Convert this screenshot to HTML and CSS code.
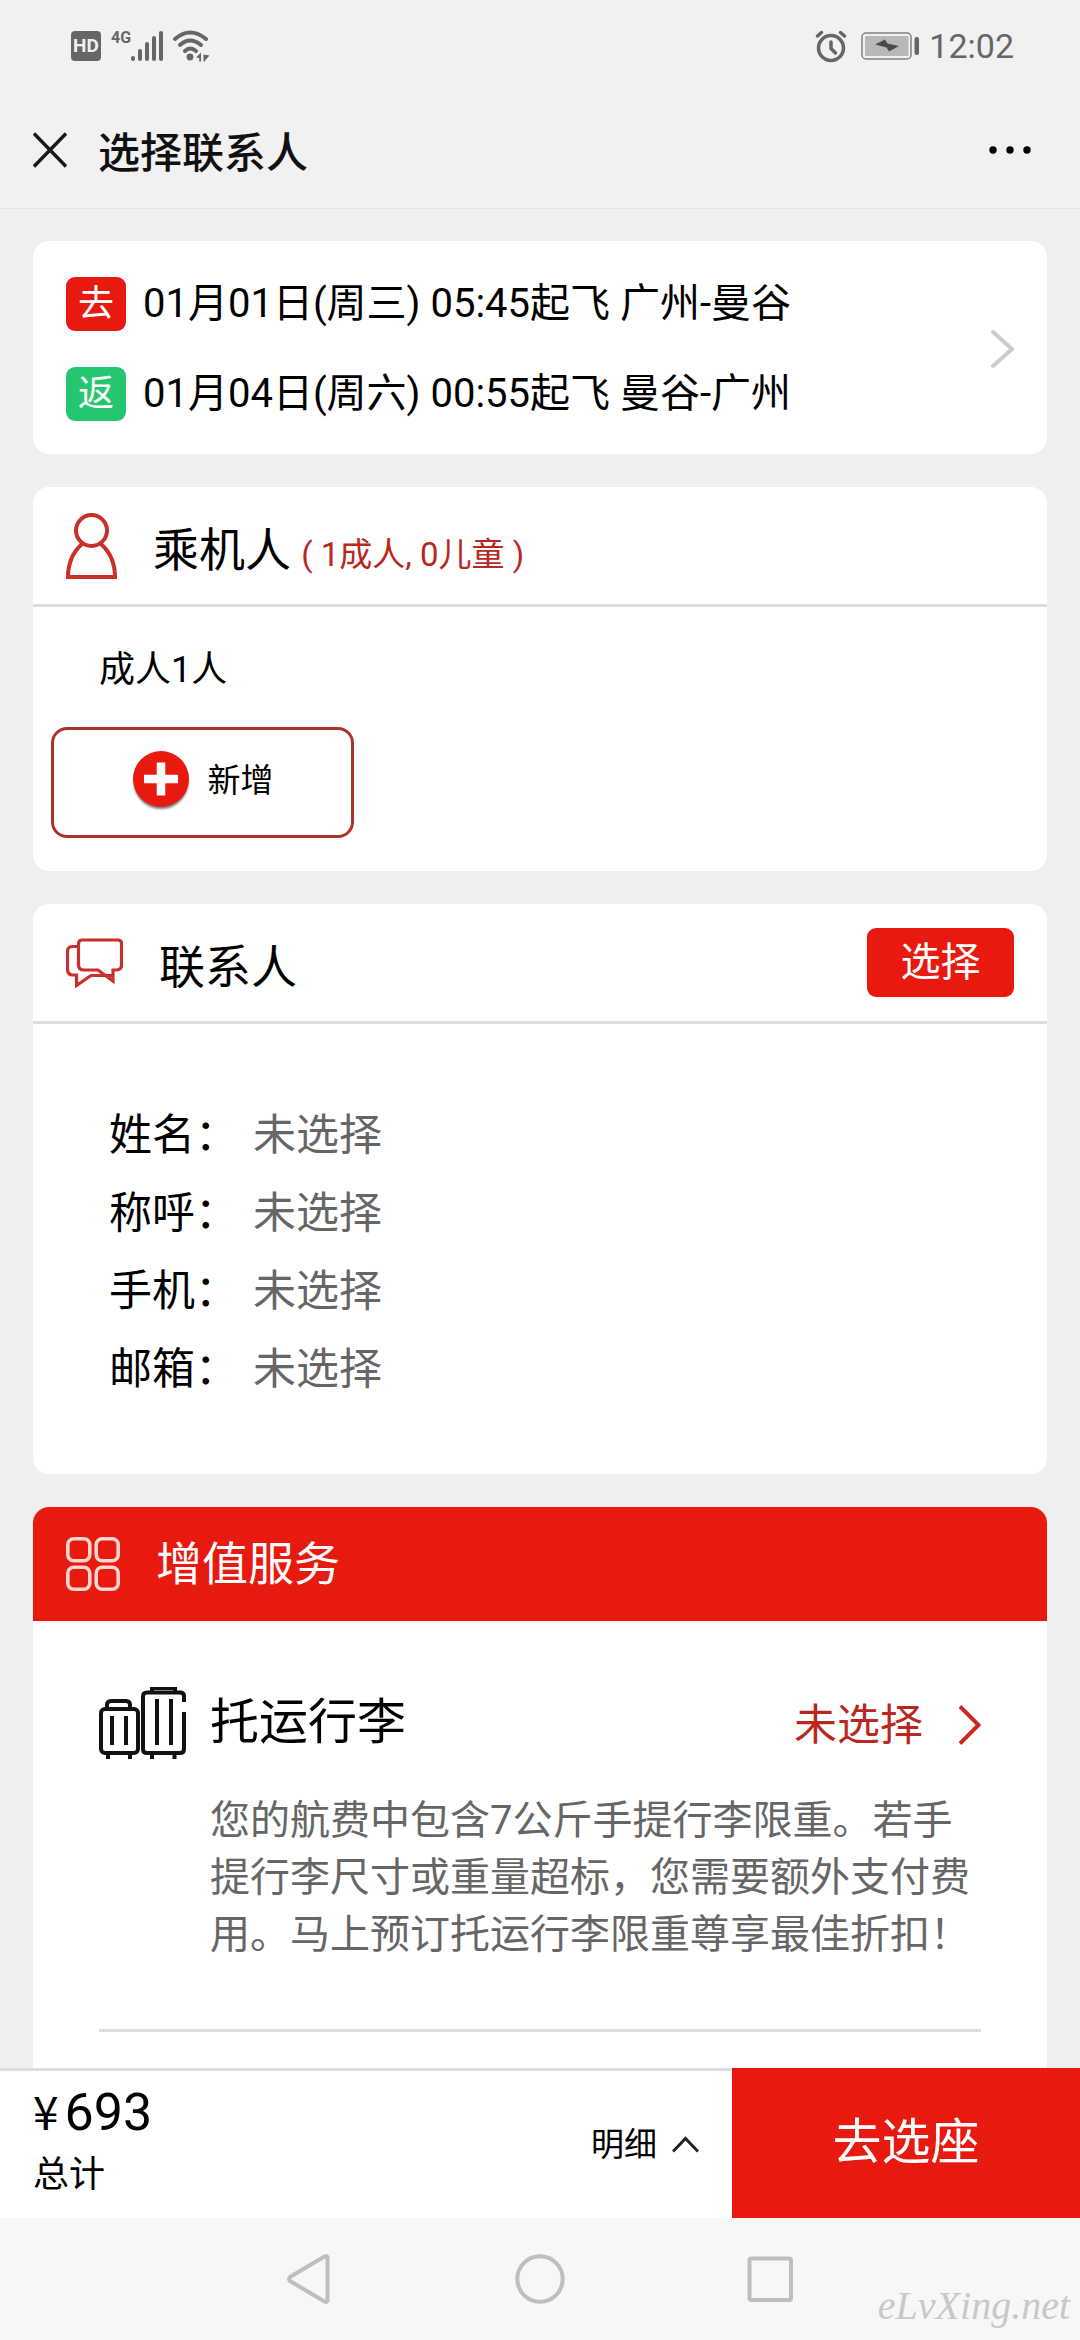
FILE: index.html
```html
<!DOCTYPE html>
<html lang="zh-CN">
<head>
<meta charset="utf-8">
<meta name="viewport" content="width=device-width, initial-scale=1">
<title>选择联系人</title>
<link rel="stylesheet" href="styles.css">
</head>
<body>
<div class="status-bar">
  <div class="status-left">
    <span class="hd">HD</span>
    <span class="net">4G</span>
    <svg class="signal" width="33" height="32" viewBox="0 0 33 32" fill="none" stroke="#666" stroke-width="4" stroke-linecap="round"><path d="M2 28v1M9 21v8M16 14v15M23 8v21M30 3v26"/></svg>
    <svg width="38" height="32" viewBox="0 0 38 32"><g fill="none" stroke="#666" stroke-width="4" stroke-linecap="round"><path d="M3 9Q18 -4 34 9"/><path d="M8 15Q18 6 29 15"/><path d="M13 21Q18 16 24 21"/></g><circle cx="18" cy="27" r="3.4" fill="#666"/><path d="M29 22.500v9h-1.800v-3.500l-3.200-.5zM31.500 22.500v2l6 1-4 4.500-.8 1.500h-1.200z" fill="#666"/></svg>
  </div>
  <div class="status-right">
    <svg width="32" height="34" viewBox="0 0 32 34" fill="none" stroke="#666" stroke-linecap="round"><circle cx="16" cy="19" r="12.500" stroke-width="3.500"/><path d="M16 13v6.500l4.500 4.500" stroke-width="3.500"/><path d="M2.500 7l4-3.500M29.500 7l-4-3.500" stroke-width="3.500"/></svg>
    <svg class="battery" width="58" height="28" viewBox="0 0 58 28"><rect x="1" y="1" width="49" height="26" rx="4" fill="none" stroke="#808080" stroke-width="1.500"/><rect x="4" y="4" width="43.500" height="20" rx="1" fill="#b8b8b8"/><path d="M14 12.500L24 7.500L26.500 11.500L38 14L28 19.500L25.500 15.500z" fill="#4a4a4a"/><rect x="53.500" y="5" width="4.500" height="18" rx="2" fill="#666"/></svg>
    <span class="clock">12:02</span>
  </div>
</div>
<header class="title-bar">
  <button class="icon-button" type="button" aria-label="关闭"><svg width="34" height="36" viewBox="0 0 34 36" fill="none" stroke="#181818" stroke-width="3.400"><path d="M1 1.500L33 34.500M33 1.500L1 34.500"/></svg></button>
  <h1>选择联系人</h1>
  <button class="icon-button" type="button" aria-label="更多"><svg width="44" height="12" viewBox="0 0 44 12"><circle cx="5" cy="6" r="3.700"/><circle cx="22" cy="6" r="3.700"/><circle cx="39" cy="6" r="3.700"/></svg></button>
</header>

<main>
  <a class="card trip" href="#trip">
    <span class="legs">
      <span class="leg"><span class="badge go">去</span>01月01日(周三) 05:45起飞 广州-曼谷</span>
      <span class="leg"><span class="badge back">返</span>01月04日(周六) 00:55起飞 曼谷-广州</span>
    </span>
    <svg width="24" height="40" viewBox="0 0 24 40" fill="none" stroke="#ccc" stroke-width="4" stroke-linecap="round"><path d="M3 3L22 20L3 37"/></svg>
  </a>

  <section class="card">
    <div class="card-head">
      <svg class="head-icon" width="51" height="66" viewBox="0 0 51 66" fill="none" stroke="#c9302a" stroke-width="4"><circle cx="25.500" cy="17.500" r="15.500"/><path d="M16 31C6 40 2 52 2 64h47C49 52 45 40 35 31"/></svg>
      <h2>乘机人 <span class="count">( 1成人, 0儿童 )</span></h2>
    </div>
    <div class="passengers">
      <p>成人1人</p>
      <button class="add" type="button">
        <svg width="58" height="62" viewBox="0 0 58 62"><defs><filter id="soft" x="-20%" y="-20%" width="140%" height="140%"><feGaussianBlur stdDeviation="1.200"/></filter></defs><circle cx="29" cy="31.500" r="27.500" fill="#777" filter="url(#soft)"/><circle cx="29" cy="29" r="28" fill="#e81a10"/><path d="M29 12.500v33M12 29h34" stroke="#fff" stroke-width="8.500"/></svg>
        新增
      </button>
    </div>
  </section>

  <section class="card">
    <div class="card-head">
      <svg class="head-icon" width="57" height="50" viewBox="0 0 57 50" fill="none" stroke="#c9302a" stroke-width="3.200" stroke-linejoin="miter"><path d="M16 2h36q3.500 0 3.500 3.500v22q0 4-4.500 4.500h-4v11L32 32H18q-5.500 0-5.500-5V6q0-4 3.500-4z"/><path d="M12 8.500H6Q1.500 9 1.500 13v18q0 6 5 6h4v10.500L25 37.500q12 0 21 0"/></svg>
      <h2>联系人</h2>
      <button class="choose" type="button">选择</button>
    </div>
    <dl class="contact">
      <dt>姓名：</dt><dd>未选择</dd>
      <dt>称呼：</dt><dd>未选择</dd>
      <dt>手机：</dt><dd>未选择</dd>
      <dt>邮箱：</dt><dd>未选择</dd>
    </dl>
  </section>

  <section class="card services">
    <div class="services-head">
      <svg class="head-icon" width="54" height="54" viewBox="0 0 54 54" fill="none" stroke="#ffd5d0" stroke-width="3.600"><rect x="1.800" y="1.800" width="22" height="22" rx="6"/><rect x="30.200" y="1.800" width="22" height="22" rx="6"/><rect x="1.800" y="30.200" width="22" height="22" rx="6"/><rect x="30.200" y="30.200" width="22" height="22" rx="6"/></svg>
      <h2>增值服务</h2>
    </div>
    <div class="service">
      <div class="service-row">
        <svg width="87" height="72" viewBox="0 0 87 72" fill="none" stroke="#111" stroke-width="4"><path d="M8 22v-4q0-4 4-4h15q4 0 4 4v4"/><rect x="2" y="22" width="37" height="44" rx="4"/><path d="M13 29v29M27 29v29M9 67v5M31 67v5"/><path d="M53 5V1h23v4"/><path d="M85 15V9q0-3.500-4-3.500H48q-4 0-4 4V62q0 4 4 4h33q4 0 4-4V25"/><path d="M58 12v46M72 12v46M53 67v5M75.500 67v5"/></svg>
        <h3>托运行李</h3>
        <a class="service-link" href="#baggage">未选择
          <svg width="22" height="40" viewBox="0 0 22 40" fill="none" stroke="#cc2720" stroke-width="4"><path d="M1 1.500L19.500 20L1 38.500"/></svg>
        </a>
      </div>
      <p class="service-text">您的航费中包含7公斤手提行李限重。若手提行李尺寸或重量超标，您需要额外支付费用。马上预订托运行李限重尊享最佳折扣！</p>
    </div>
  </section>
</main>

<footer class="checkout">
  <div class="total">
    <div class="price"><span class="yen">¥</span>693</div>
    <div class="total-label">总计</div>
  </div>
  <button class="detail" type="button">明细
    <svg width="27" height="17" viewBox="0 0 27 17" fill="none" stroke="#222" stroke-width="3"><path d="M1 15.500L13.500 2.500L26 15.500"/></svg>
  </button>
  <button class="next" type="button">去选座</button>
</footer>

<nav class="system-nav">
  <button class="icon-button" type="button" aria-label="返回"><svg width="50" height="50" viewBox="0 0 50 50" fill="none" stroke="#bebebe" stroke-width="4" stroke-linejoin="round"><path d="M42.500 3v44q-1 1.500-3 .500L5 27q-2-2 0-4L39.500 2.500q2-1 3 .500z"/></svg></button>
  <button class="icon-button" type="button" aria-label="主页"><svg width="50" height="50" viewBox="0 0 50 50" fill="none" stroke="#bebebe" stroke-width="4"><circle cx="25" cy="25" r="22.700"/></svg></button>
  <button class="icon-button" type="button" aria-label="最近任务"><svg width="50" height="50" viewBox="0 0 50 50" fill="none" stroke="#bebebe" stroke-width="4"><rect x="4.500" y="4.500" width="41.500" height="41.500" rx="2"/></svg></button>
  <span class="watermark">eLvXing.net</span>
</nav>
</body>
</html>
```
FILE: styles.css
```css
* { box-sizing: border-box; margin: 0; padding: 0; }

body {
  min-height: 100vh;
  display: flex;
  flex-direction: column;
  background: #efefef;
  color: #000;
  font-family: Roboto, "Noto Sans CJK SC", sans-serif;
  font-size: 40px;
}

svg { display: block; flex: none; }
a { color: inherit; text-decoration: none; }
button { font: inherit; line-height: 50px; color: inherit; border: 0; background: none; }
h1, h2, h3 { font-weight: 400; }
.icon-button { display: flex; }

.status-bar {
  height: 90px;
  padding: 2px 66px 0 71px;
  display: flex;
  justify-content: space-between;
  align-items: center;
  background: #f1f1f1;
  color: #666;
}
.status-left, .status-right { display: flex; align-items: center; }
.hd {
  width: 30px;
  margin-right: 10px;
  border-radius: 4px;
  background: #666;
  color: #f1f1f1;
  font-size: 19px;
  font-weight: 700;
  line-height: 30px;
  text-align: center;
}
.net { align-self: flex-start; font-size: 16px; font-weight: 700; line-height: 16px; }
.signal { margin-right: 8px; }
.status-right { gap: 14px; }
.clock { font-size: 34px; line-height: 40px; }
.battery { margin-right: -4px; }

.title-bar {
  height: 119px;
  padding: 2px 48px 0 33px;
  display: flex;
  align-items: center;
  gap: 31px;
  background: #f1f1f1;
  border-bottom: 1px solid #e3e3e3;
}
.title-bar h1 {
  flex: 1;
  font-size: 42px;
  font-weight: 500;
  font-family: "Noto Sans CJK SC", sans-serif;
  line-height: 60px;
  color: #111;
}

main {
  flex: 1;
  padding: 32px 33px 0;
  display: flex;
  flex-direction: column;
  gap: 33px;
}
.card { background: #fff; border-radius: 16px; }

.trip {
  padding: 36px 33px 33px;
  display: flex;
  align-items: center;
  justify-content: space-between;
}
.legs { display: grid; gap: 36px; }
.leg { display: flex; align-items: center; gap: 17px; line-height: 54px; }
.badge {
  width: 60px;
  border-radius: 9px;
  color: #fff;
  font-size: 36px;
  text-align: center;
}
.go { background: #e81a10; }
.back { background: #25c670; }

.card-head {
  height: 120px;
  padding: 0 33px;
  display: flex;
  align-items: center;
  border-bottom: 3px solid #ddd;
}
.head-icon { margin-right: 36px; }
h2 { font-size: 46px; line-height: 66px; }
.card-head h2 { font-family: "Noto Sans CJK SC", sans-serif; }
.count {
  color: #b9271f;
  font-family: Roboto, "Noto Sans CJK SC", sans-serif;
  font-size: 33px;
  line-height: 33px;
}

.passengers { padding: 36px 18px 33px; }
.passengers p { padding-left: 48px; margin-bottom: 30px; font-size: 36px; line-height: 54px; }
.add {
  width: 303px;
  height: 111px;
  padding-bottom: 4px;
  display: flex;
  align-items: center;
  justify-content: center;
  gap: 18px;
  border: 3px solid #a9322b;
  border-radius: 16px;
  font-size: 33px;
}

.choose {
  width: 147px;
  height: 69px;
  margin-left: auto;
  border-radius: 9px;
  background: #e81a10;
  color: #fff;
}
.contact {
  padding: 72px 76px 66px;
  display: grid;
  grid-template-columns: max-content 1fr;
  column-gap: 15px;
  font-size: 43px;
  line-height: 78px;
}
.contact dd { color: #666; }

.services { flex: 1; border-radius: 16px 16px 0 0; }
.services-head {
  height: 114px;
  padding: 0 33px;
  display: flex;
  align-items: center;
  border-radius: 16px 16px 0 0;
  background: #e81a10;
  color: #fff;
}
.service { margin: 66px 66px 36px; padding-bottom: 66px; border-bottom: 3px solid #ddd; }
.service-row { display: flex; align-items: center; gap: 24px; }
.service-row h3 { font-size: 49px; line-height: 72px; }
.service-link {
  margin-left: auto;
  display: flex;
  align-items: center;
  gap: 36px;
  padding-top: 3px;
  color: #b9271f;
  font-size: 43px;
  line-height: 66px;
}
.service-text { margin: 33px 0 0 111px; color: #666; line-height: 57px; }

.checkout { display: flex; height: 150px; background: #fff; }
.total, .detail { border-top: 3px solid #ddd; }
.total { flex: 1; padding: 12px 33px 0; }
.price { display: flex; align-items: baseline; gap: 6px; height: 62px; font-size: 52px; line-height: 60px; }
.yen { font-family: "Noto Sans CJK SC", sans-serif; font-size: 46px; line-height: 46px; }
.total-label { font-size: 36px; line-height: 60px; }
.detail { padding-right: 33px; display: flex; align-items: center; gap: 15px; font-size: 33px; }
.next { width: 348px; background: #e81a10; color: #fff; font-size: 49px; }

.system-nav {
  position: relative;
  height: 122px;
  display: flex;
  align-items: center;
  justify-content: center;
  gap: 180px;
  background: #f7f7f7;
}
.watermark {
  position: absolute;
  right: 10px;
  bottom: 12px;
  color: #c8c8c8;
  font-family: "Liberation Serif", serif;
  font-size: 40px;
  font-style: italic;
  line-height: 44px;
}
```
